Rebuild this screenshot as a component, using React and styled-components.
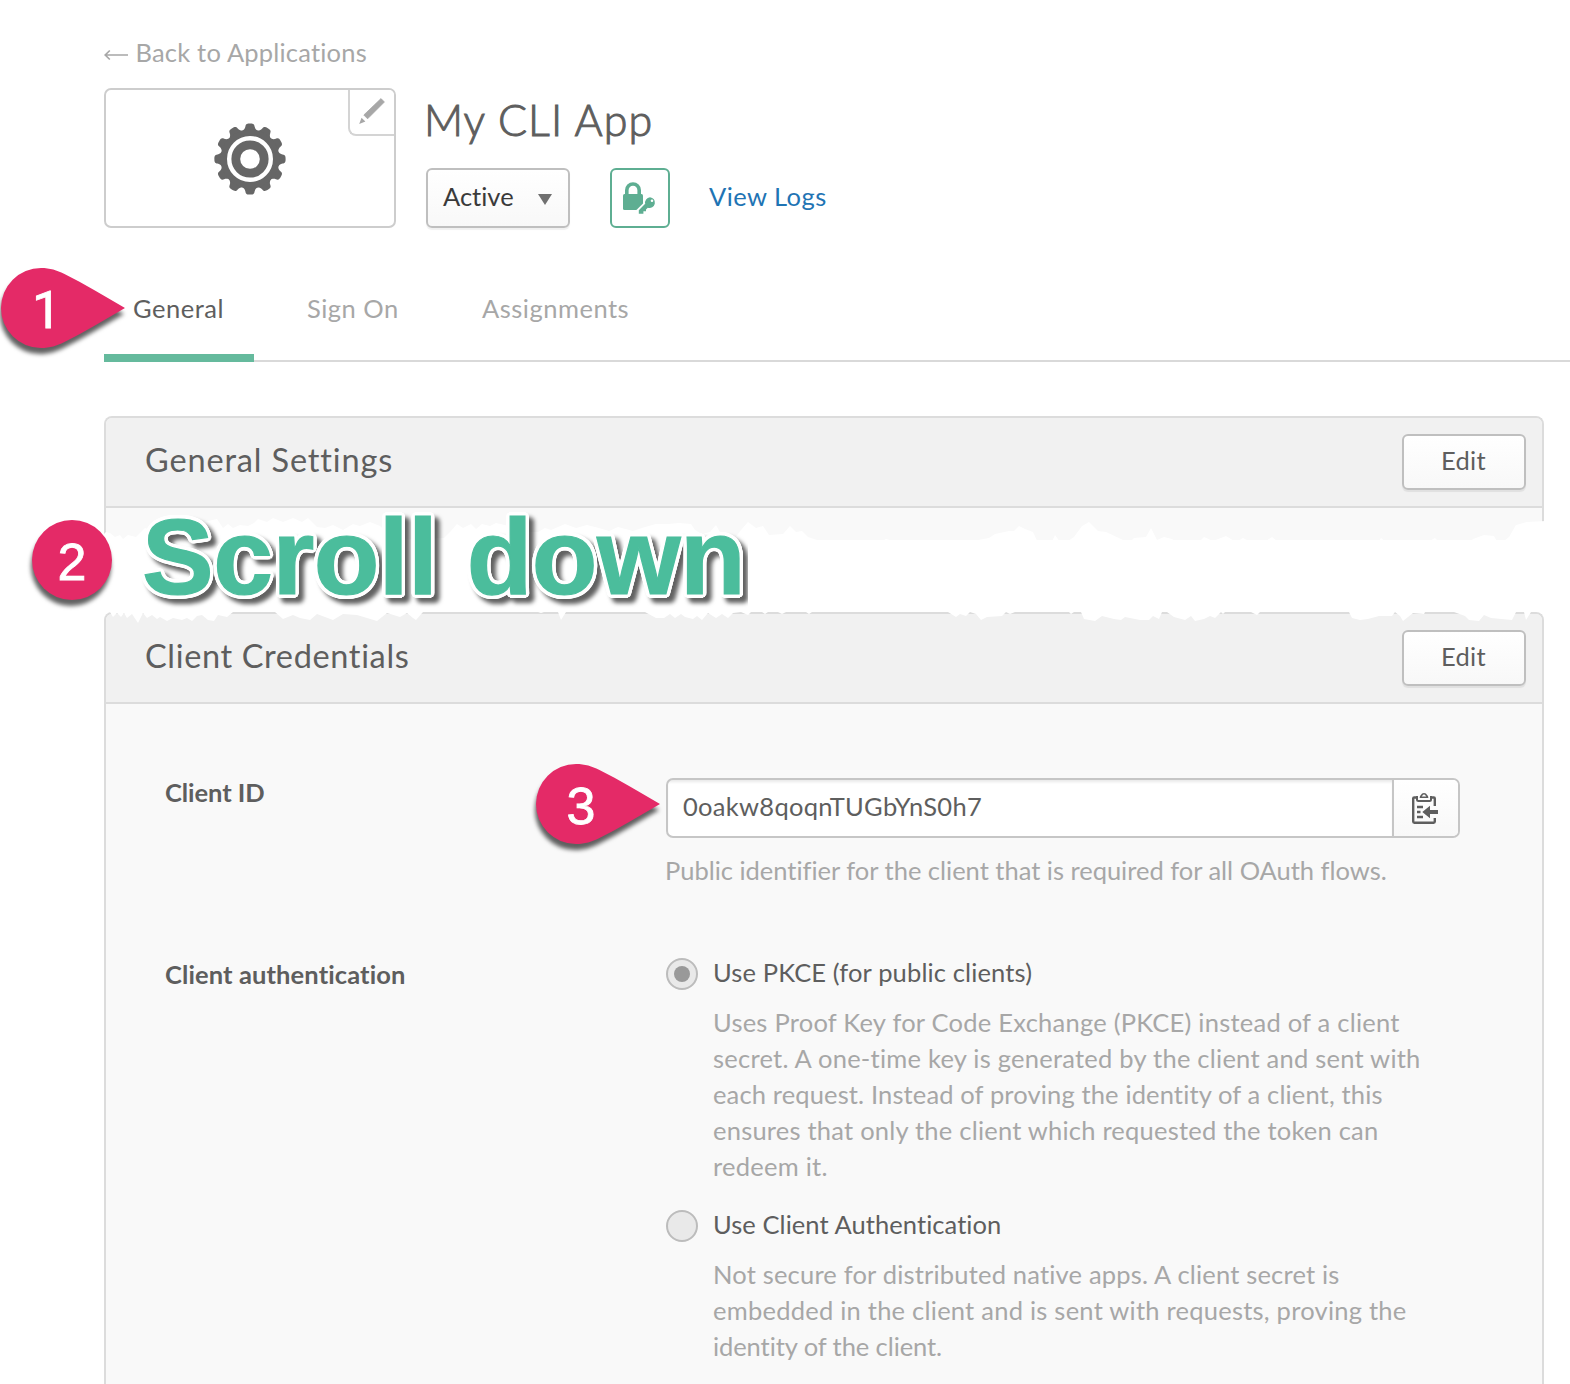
import React from "react";
import styled, { createGlobalStyle } from "styled-components";

const GlobalStyle = createGlobalStyle`
  html, body { margin: 0; padding: 0; background: #fff; }
  *, *::before, *::after { box-sizing: border-box; }
  body {
    font-family: Lato, "Open Sans", sans-serif;
    font-size: 25.5px;
    line-height: 36px;
    color: #5e5e5e;
    font-variant-ligatures: none;
  }
`;

const Page = styled.main`
  display: flex;
  flex-direction: column;
  width: 1570px;
  height: 1384px;
  padding: 34px 0 0 104px;
  overflow: hidden;
  > * { flex-shrink: 0; }
`;

const BackLink = styled.a`
  display: flex;
  align-items: center;
  gap: 7.5px;
  height: 36px;
  color: #a7a7a7;
  letter-spacing: 0.2px;
  svg { margin-top: 5px; }
`;

const AppHeader = styled.header`
  display: flex;
  gap: 30px;
  height: 140px;
  margin-top: 18px;
`;

const LogoBox = styled.div`
  position: relative;
  display: flex;
  justify-content: center;
  align-items: center;
  width: 292px;
  height: 140px;
  border: 2px solid #cdcdcd;
  border-radius: 7px;
`;

const LogoEdit = styled.button`
  position: absolute;
  top: 0;
  right: 0;
  width: 46px;
  height: 46px;
  padding: 0;
  background: #fff;
  border: solid #d4d4d4;
  border-width: 0 0 2px 2px;
  border-radius: 0 5px 0 8px;
  svg { display: block; }
`;

const HeaderInfo = styled.div`
  display: flex;
  flex-direction: column;
  justify-content: space-between;
  padding-top: 6px;
`;

const AppTitle = styled.h1`
  margin: 0 0 0 -2px;
  font-size: 43px;
  font-weight: 300;
  line-height: 52px;
  letter-spacing: 1.09px;
  -webkit-text-stroke: 1px #5e5e5e;
`;

const Controls = styled.div`
  display: flex;
  gap: 40px;
`;

const StatusSelect = styled.button`
  display: flex;
  align-items: flex-start;
  justify-content: space-between;
  width: 144px;
  height: 60px;
  padding: 0 16px 0 15px;
  border: 2px solid #bfbfbf;
  border-radius: 6px;
  background: linear-gradient(#fff, #f8f8f8);
  box-shadow: 0 2px 1px rgba(0, 0, 0, 0.06);
  font: inherit;
  line-height: 52px;
  color: #3a3a3a;
  svg { margin-top: 24px; }
`;

const LockButton = styled.button`
  display: block;
  width: 60px;
  height: 60px;
  padding: 0;
  border: 2px solid #5eae92;
  border-radius: 6px;
  background: #fff;
  svg { display: block; }
`;

const LogsLink = styled.a`
  line-height: 57px;
  letter-spacing: 0.45px;
  margin-left: -1px;
  color: #1f74b4;
`;

const Tabs = styled.nav`
  position: relative;
  display: flex;
  gap: 24px;
  height: 72px;
  margin-top: 62px;
  border-bottom: 2px solid #d9d9d9;
`;

const Tab = styled.a`
  width: ${(p) => p.$width}px;
  height: 72px;
  padding-left: 29px;
  letter-spacing: 0.5px;
  white-space: nowrap;
  color: ${(p) => (p.$active ? "#5e5e5e" : "#a7a7a7")};
  border-bottom: ${(p) => (p.$active ? "8px solid #65ba9d" : "0")};
`;

const Panel = styled.section`
  width: 1440px;
  margin-top: ${(p) => p.$top || 0}px;
  border: solid #dcdcdc;
  border-width: 2px 2px 0;
  border-radius: 8px 8px 0 0;
  background: #f9f9f9;
`;

const PanelHeader = styled.div`
  display: flex;
  align-items: center;
  justify-content: space-between;
  height: 90px;
  padding: 0 16px 0 39px;
  border-bottom: 2px solid #dcdcdc;
  border-radius: 6px 6px 0 0;
  background: #f1f1f1;
`;

const PanelTitle = styled.h2`
  margin: 0 0 5px;
  font-size: 32.5px;
  font-weight: 400;
  line-height: 40px;
  letter-spacing: ${(p) => p.$track}px;
`;

const EditButton = styled.button`
  width: 124px;
  height: 56px;
  padding: 0 1px 4px 0;
  border: 2px solid #bfbfbf;
  border-radius: 6px;
  background: linear-gradient(#fff, #f8f8f8);
  box-shadow: 0 2px 1px rgba(0, 0, 0, 0.07);
  font: inherit;
  letter-spacing: 0.35px;
  color: #5e5e5e;
`;

const CutBody = styled.div`
  height: 32px;
`;

const TornGap = styled.div`
  position: relative;
  z-index: 1;
  width: 1466px;
  height: 72px;
`;

const TornPaper = styled.svg`
  position: absolute;
  left: -4px;
  top: -40px;
`;

const outline = Array.from({ length: 24 }, (_, i) => {
  const a = (i * Math.PI) / 12;
  return `${(Math.cos(a) * 4).toFixed(2)}px ${(Math.sin(a) * 4).toFixed(2)}px 0 #fff`;
}).join(", ");

const Banner = styled.div`
  position: absolute;
  left: 26px;
  top: -50px;
  width: 618px;
  height: 130px;
  padding: 7px 0 0 12px;
  overflow: hidden;
  font-family: "Liberation Sans", Arial, sans-serif;
  font-weight: 700;
  font-size: 107.5px;
  line-height: 120px;
  letter-spacing: -0.55px;
  white-space: nowrap;
  color: #4bbd9c;
  span {
    display: block;
    -webkit-text-stroke: 1.2px #4bbd9c;
    text-shadow: ${outline};
    filter: drop-shadow(5px 5px 2px rgba(0, 0, 0, 0.62));
  }
`;

const PinBox = styled.div`
  position: absolute;
  left: ${(p) => p.$x}px;
  top: ${(p) => p.$y}px;
  width: 80px;
  height: 80px;
  z-index: 2;
  svg {
    position: absolute;
    left: 0;
    top: 0;
    overflow: visible;
    filter: drop-shadow(-1px 6px 2px rgba(0, 0, 0, 0.62));
  }
`;

const PinDigit = styled.span`
  position: relative;
  display: block;
  padding-left: ${(p) => p.$shift}px;
  font-family: ${(p) => (p.$plain ? "Roboto" : '"Liberation Sans"')}, Arial, sans-serif;
  font-size: 52px;
  line-height: ${(p) => p.$line || 84}px;
  text-align: center;
  color: #fff;
  -webkit-text-stroke: 0.8px #fff;
`;

const PanelBody = styled.div`
  display: flex;
  flex-direction: column;
  gap: 66px;
  padding: 74px 0 0 59px;
`;

const FormRow = styled.div`
  display: grid;
  grid-template-columns: 501px 794px;
`;

const FieldLabel = styled.div`
  margin-top: ${(p) => p.$offset}px;
  font-weight: 700;
  letter-spacing: ${(p) => p.$track}px;
`;

const Field = styled.div`
  position: relative;
`;

const CopyGroup = styled.div`
  display: flex;
  height: 60px;
  border: 2px solid #c6c6c6;
  border-radius: 7px;
  background: #fff;
  overflow: hidden;
`;

const IdValue = styled.div`
  flex: 1;
  padding-left: 15px;
  line-height: 53px;
  letter-spacing: 0.29px;
  box-shadow: inset 0 3px 3px -1px rgba(0, 0, 0, 0.09);
`;

const CopyButton = styled.button`
  width: 66px;
  padding: 0;
  border: 0;
  border-left: 2px solid #c6c6c6;
  background: linear-gradient(#fff, #f8f8f8);
  svg { display: block; }
`;

const Hint = styled.p`
  margin: 14px 0 0 -1px;
  color: #a7a7a7;
  letter-spacing: -0.01px;
  white-space: nowrap;
`;

const Option = styled.div`
  display: flex;
  gap: 15px;
  margin-bottom: 22px;
`;

const Radio = styled.span`
  flex: none;
  display: flex;
  align-items: center;
  justify-content: center;
  width: 32px;
  height: 32px;
  margin-top: 4px;
  border: 2px solid #bcbcbc;
  border-radius: 50%;
  background: #e9e9e9;
  &::after {
    content: "";
    width: 16px;
    height: 16px;
    border-radius: 50%;
    background: ${(p) => (p.$checked ? "#999" : "transparent")};
  }
`;

const OptionLabel = styled.div`
  letter-spacing: ${(p) => p.$track}px;
`;

const Description = styled.div`
  margin-top: 14px;
  color: #a7a7a7;
`;

const Line = styled.div`
  letter-spacing: ${(p) => p.$track}px;
  white-space: nowrap;
`;

const TORN_TOP = "104,534 106,532 110,533 115,537 120,535 123,539 128,535 136,537 145,528 153,531 162,526 170,530 180,524 190,528 200,522 208,521 217,519 223,528 228,524 233,528 240,525 248,526 254,523 258,519 267,522 273,518 283,522 293,518 302,522 308,518 317,527 325,528 333,525 343,530 353,524 360,526 370,522 380,526 396,540 444,538 450,532 457,524 463,528 471,524 476,529 482,524 490,526 496,523 509,526 525,532 538,532 545,528 551,530 565,524 576,528 587,525 599,528 609,531 618,527 633,531 645,527 656,524 668,524 679,523 691,524 695,530 702,534 710,532 716,525 721,534 735,538 741,530 748,522 756,528 763,526 769,535 783,534 790,526 796,532 802,531 808,537 817,540 827,545 832,540 844,547 857,550 865,545 871,547 886,539 898,542 907,548 915,547 921,542 926,548 934,543 940,545 945,547 955,542 970,549 978,540 989,538 995,534 1009,531 1014,531 1019,526 1025,529 1033,532 1039,545 1045,542 1050,546 1055,535 1062,545 1074,537 1082,526 1089,522 1098,531 1106,532 1121,539 1129,543 1134,538 1146,537 1151,528 1157,540 1164,537 1172,539 1183,548 1191,544 1196,545 1204,537 1213,541 1226,536 1236,542 1243,538 1258,546 1272,537 1283,546 1298,543 1304,547 1317,540 1326,545 1343,545 1351,547 1358,547 1364,544 1374,548 1381,538 1386,542 1393,549 1403,540 1409,548 1417,542 1424,544 1435,538 1445,548 1452,541 1465,546 1473,539 1484,535 1494,536 1499,545 1509,537 1516,525 1527,522 1546,521";

const bottomEdge = [
  [104, 611], [110, 612], [113, 617], [117, 613], [121, 617], [124, 613], [127, 618], [132, 614], [136, 620], [138, 623], [143, 613], [147, 618], [152, 615], [157, 619], [160, 617], [167, 621], [173, 618], [182, 620], [187, 618], [192, 621], [197, 616], [202, 615], [208, 620], [214, 621], [218, 615], [227, 617], [233, 612], [275, 612], [283, 619], [293, 615], [300, 618], [310, 620], [317, 614], [325, 617], [333, 620], [343, 614], [357, 615], [367, 618], [377, 621], [387, 613], [400, 617], [407, 613], [413, 618], [416, 620], [423, 612],
  [538, 612], [541, 613], [544, 612], [558, 612], [561, 620], [566, 612], [645, 612], [656, 618], [664, 618], [670, 614], [675, 618], [681, 614], [685, 617], [693, 619], [697, 616], [702, 620], [708, 613], [716, 618], [722, 614], [728, 618], [733, 613], [741, 612], [748, 615], [751, 612], [762, 612], [765, 614], [768, 612], [778, 612], [782, 614], [786, 612], [806, 612], [809, 614], [812, 612], [948, 612], [956, 617], [960, 614], [966, 616], [970, 612], [976, 614], [981, 620], [987, 617], [1002, 616], [1006, 612], [1010, 614], [1015, 612], [1069, 612], [1071, 614], [1074, 612], [1081, 612], [1084, 619], [1095, 621], [1102, 616], [1114, 619], [1121, 620], [1125, 617], [1140, 620], [1149, 620], [1153, 616], [1159, 619], [1162, 612], [1167, 612], [1174, 617], [1185, 620], [1191, 616], [1195, 621], [1204, 619], [1210, 616], [1215, 618], [1221, 612], [1223, 614], [1225, 612], [1251, 612], [1257, 615], [1260, 612], [1349, 612], [1352, 618], [1360, 620], [1368, 619], [1379, 616], [1392, 616], [1395, 612], [1400, 616], [1403, 621], [1413, 613], [1424, 614], [1425, 612], [1454, 612], [1465, 616], [1469, 620], [1479, 621], [1484, 615], [1491, 618], [1512, 620], [1516, 612], [1524, 612], [1526, 620], [1531, 612], [1546, 612],
];

function Tear() {
  const lower = [...bottomEdge].reverse().map((p) => p.join(",")).join(" ");
  return (
    <TornPaper width="1450" height="130" viewBox="100 500 1450 130">
      <polygon points={`${TORN_TOP} ${lower}`} fill="#fff" />
    </TornPaper>
  );
}

function Pin({ x, y, label, round, plain, shift = 0, line }) {
  return (
    <PinBox $x={x} $y={y}>
      <svg width="124" height="80" viewBox="-40 -40 124 80">
        {round ? (
          <circle r="40" fill="#e42a67" />
        ) : (
          <path d="M0-40C9-40 16-37.6 23-34.2C44-24 63-12 84 0C63 12 44 24 23 34.2C16 37.6 9 40 0 40A40 40 0 0 1 0-40Z" fill="#e42a67" />
        )}
      </svg>
      <PinDigit $plain={plain} $shift={shift} $line={line}>{label}</PinDigit>
    </PinBox>
  );
}

const LogoGear = styled.svg`
  margin-top: 2px;
`;

function Gear() {
  const teeth = Array.from({ length: 12 }, (_, i) => i * 30);
  return (
    <LogoGear width="76" height="76" viewBox="-38 -38 76 76" fill="#666">
      {teeth.map((a) => (
        <path key={a} transform={`rotate(${a})`} d="M-9-27C-6-29-5-30.5-4.600-32.500C-4.200-35.500-2.500-35.600 0-35.600S4.200-35.500 4.600-32.500C5-30.500 6-29 9-27Z" />
      ))}
      <circle r="29.5" />
      <circle r="20.8" fill="none" stroke="#fff" strokeWidth="4.4" />
      <circle r="9.8" fill="#fff" />
    </LogoGear>
  );
}

const Pencil = () => (
  <svg width="44" height="44" viewBox="350 90 44 44" fill="#a7a7a7">
    <path d="M381 98.6L384.4 102L367.6 118.8L363.8 115Z" stroke="#a7a7a7" strokeWidth="0.8" strokeLinejoin="round" />
    <path d="M359.2 124L361.5 117.8L365.4 121.6Z" />
  </svg>
);

const LockKey = () => (
  <svg width="56" height="56" viewBox="612 170 56 56" fill="#5eae92">
    <path d="M626.8 196V190.2A6.2 6.2 0 0 1 639.2 190.2V196" fill="none" stroke="#5eae92" strokeWidth="3.6" />
    <path d="M624.5 194H641.5Q643 194 643 195.5V203.5L636.4 210H624.5Q623 210 623 208.500V195.500Q623 194 624.5 194Z" />
    <path fillRule="evenodd" d="M650 197.2A5.400 5.400 0 1 1 647.800 207.700L646 209.500V211.300H643.400V213.800H638.800V210.200L645.200 203.800A5.400 5.400 0 0 1 650 197.200ZM652 199.500A1.300 1.300 0 1 0 652 202.100A1.300 1.300 0 1 0 652 199.500Z" />
  </svg>
);

const CopyIcon = () => (
  <svg width="64" height="56" viewBox="1394 780 64 56" fill="none" stroke="#5e5e5e">
    <path d="M1418 797.500H1414.200Q1413.200 797.500 1413.200 798.500V821.600Q1413.200 822.800 1414.400 822.800H1433.600Q1434.800 822.800 1434.800 821.600V818M1434.800 806V798.500Q1434.800 797.500 1433.800 797.500H1430" strokeWidth="2.400" />
    <path d="M1417 796V799.500Q1417 801 1418.500 801H1429.500Q1431 801 1431 799.500V796" strokeWidth="2" />
    <path d="M1420.500 797.300Q1420.500 795.800 1421.600 795.400A2.600 2.600 0 0 1 1426.400 795.400Q1427.500 795.800 1427.500 797.300Z" strokeWidth="1.600" />
    <path d="M1417 807H1423M1417 812H1420.500M1417 817H1423" strokeWidth="2.400" />
    <path d="M1422.300 812L1430 805.800V810H1438V814H1430V818.200Z" fill="#5e5e5e" stroke="none" />
  </svg>
);

export default function App() {
  return (
    <>
      <GlobalStyle />
      <Page>
        <BackLink>
          <svg width="24" height="12" viewBox="0 0 24 12" fill="none" stroke="#a7a7a7" strokeWidth="1.7">
            <path d="M1 6H24M5.800 1.500L1.200 6L5.800 10.500" />
          </svg>
          Back to Applications
        </BackLink>
        <AppHeader>
          <LogoBox>
            <Gear />
            <LogoEdit aria-label="Edit logo"><Pencil /></LogoEdit>
          </LogoBox>
          <HeaderInfo>
            <AppTitle>My CLI App</AppTitle>
            <Controls>
              <StatusSelect>
                Active
                <svg width="14" height="11" viewBox="0 0 14 11"><path d="M0 0H14L7 11Z" fill="#707070" /></svg>
              </StatusSelect>
              <LockButton aria-label="Authentication"><LockKey /></LockButton>
              <LogsLink>View Logs</LogsLink>
            </Controls>
          </HeaderInfo>
        </AppHeader>
        <Tabs>
          <Tab $active $width={150}>General</Tab>
          <Tab $width={151}>Sign On</Tab>
          <Tab $width={205}>Assignments</Tab>
          <Pin x={-103} y={-22} label="1" plain shift={11} line={85} />
        </Tabs>
        <Panel $top={54}>
          <PanelHeader>
            <PanelTitle $track={0.85}>General Settings</PanelTitle>
            <EditButton>Edit</EditButton>
          </PanelHeader>
          <CutBody />
        </Panel>
        <TornGap>
          <Tear />
          <Banner><span>Scroll down</span></Banner>
          <Pin x={-72} y={-20} label="2" round shift={0} />
        </TornGap>
        <Panel>
          <PanelHeader>
            <PanelTitle $track={0.65}>Client Credentials</PanelTitle>
            <EditButton>Edit</EditButton>
          </PanelHeader>
          <PanelBody>
            <FormRow>
              <FieldLabel $offset={-4} $track={-0.06}>Client ID</FieldLabel>
              <Field>
                <CopyGroup>
                  <IdValue>0oakw8qoqnTUGbYnS0h7</IdValue>
                  <CopyButton aria-label="Copy to clipboard"><CopyIcon /></CopyButton>
                </CopyGroup>
                <Hint>Public identifier for the client that is required for all OAuth flows.</Hint>
                <Pin x={-130} y={-14} label="3" shift={10} />
              </Field>
            </FormRow>
            <FormRow>
              <FieldLabel $offset={2} $track={0.11}>Client authentication</FieldLabel>
              <Field>
                <Option>
                  <Radio $checked />
                  <div>
                    <OptionLabel $track={0.14}>Use PKCE (for public clients)</OptionLabel>
                    <Description>
                      <Line $track={0.24}>Uses Proof Key for Code Exchange (PKCE) instead of a client</Line>
                      <Line $track={0.24}>secret. A one-time key is generated by the client and sent with</Line>
                      <Line $track={0.14}>each request. Instead of proving the identity of a client, this</Line>
                      <Line $track={0.22}>ensures that only the client which requested the token can</Line>
                      <Line $track={0.25}>redeem it.</Line>
                    </Description>
                  </div>
                </Option>
                <Option>
                  <Radio />
                  <div>
                    <OptionLabel $track={0.07}>Use Client Authentication</OptionLabel>
                    <Description>
                      <Line $track={0.19}>Not secure for distributed native apps. A client secret is</Line>
                      <Line $track={0.24}>embedded in the client and is sent with requests, proving the</Line>
                      <Line $track={-0.08}>identity of the client.</Line>
                    </Description>
                  </div>
                </Option>
              </Field>
            </FormRow>
          </PanelBody>
        </Panel>
      </Page>
    </>
  );
}
